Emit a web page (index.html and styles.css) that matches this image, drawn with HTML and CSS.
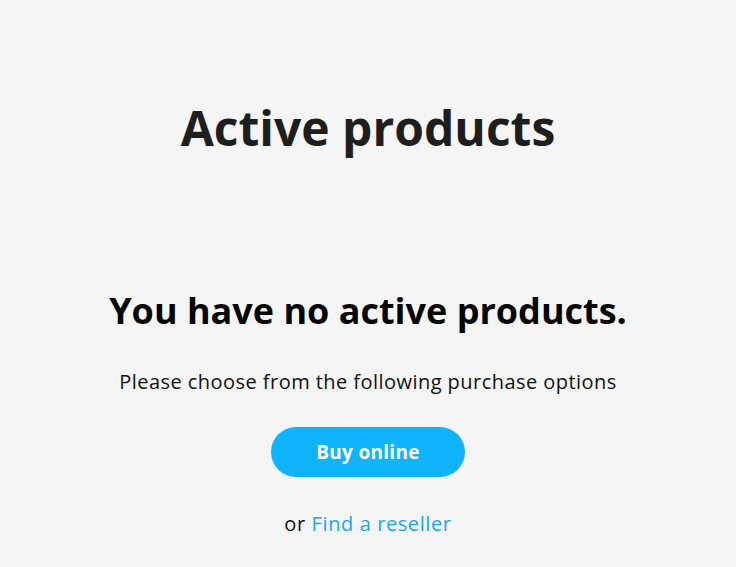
FILE: index.html
```html
<!DOCTYPE html>
<html lang="en">
<head>
    <meta charset="UTF-8">
    <meta name="viewport" content="width=device-width, initial-scale=1.0">
    <title>Active products</title>
    <link rel="stylesheet" href="styles.css">
</head>
<body>
    <main class="page">
        <h1 class="page-title">Active products</h1>

        <section class="empty-state">
            <h2>You have no active products.</h2>
            <p class="hint">Please choose from the following purchase options</p>
            <a class="buy-button" href="#">Buy online</a>
            <p class="alt">or <a href="#">Find a reseller</a></p>
        </section>
    </main>
</body>
</html>
```

FILE: styles.css
```css
body {
    margin: 0;
    background-color: #f5f5f5;
    font-family: "Open Sans", Arial, sans-serif;
    color: #111;
}
.page {
    display: flex;
    flex-direction: column;
    align-items: center;
    text-align: center;
}
.page-title {
    margin: 96px 0 0;
    font-size: 48px;
    line-height: 64px;
    font-weight: 700;
    color: #1e1e1e;
}
.empty-state {
    display: flex;
    flex-direction: column;
    align-items: center;
    margin-top: 127px;
}
.empty-state h2 {
    margin: 0;
    font-size: 36px;
    line-height: 48px;
    font-weight: 700;
    color: #050505;
}
.hint {
    margin: 33px 0 0;
    font-size: 20px;
    line-height: 28px;
    letter-spacing: 0.45px;
}
.buy-button {
    display: flex;
    align-items: center;
    justify-content: center;
    width: 194px;
    height: 50px;
    margin-top: 31px;
    border-radius: 25px;
    background-color: #0fb4fd;
    color: white;
    font-size: 19px;
    font-weight: 700;
    letter-spacing: 0.3px;
    text-decoration: none;
}
.alt {
    margin: 33px 0 0;
    font-size: 20px;
    line-height: 28px;
    letter-spacing: 0.6px;
}
.alt a {
    color: #1aa7f0;
    text-decoration: none;
}
```
